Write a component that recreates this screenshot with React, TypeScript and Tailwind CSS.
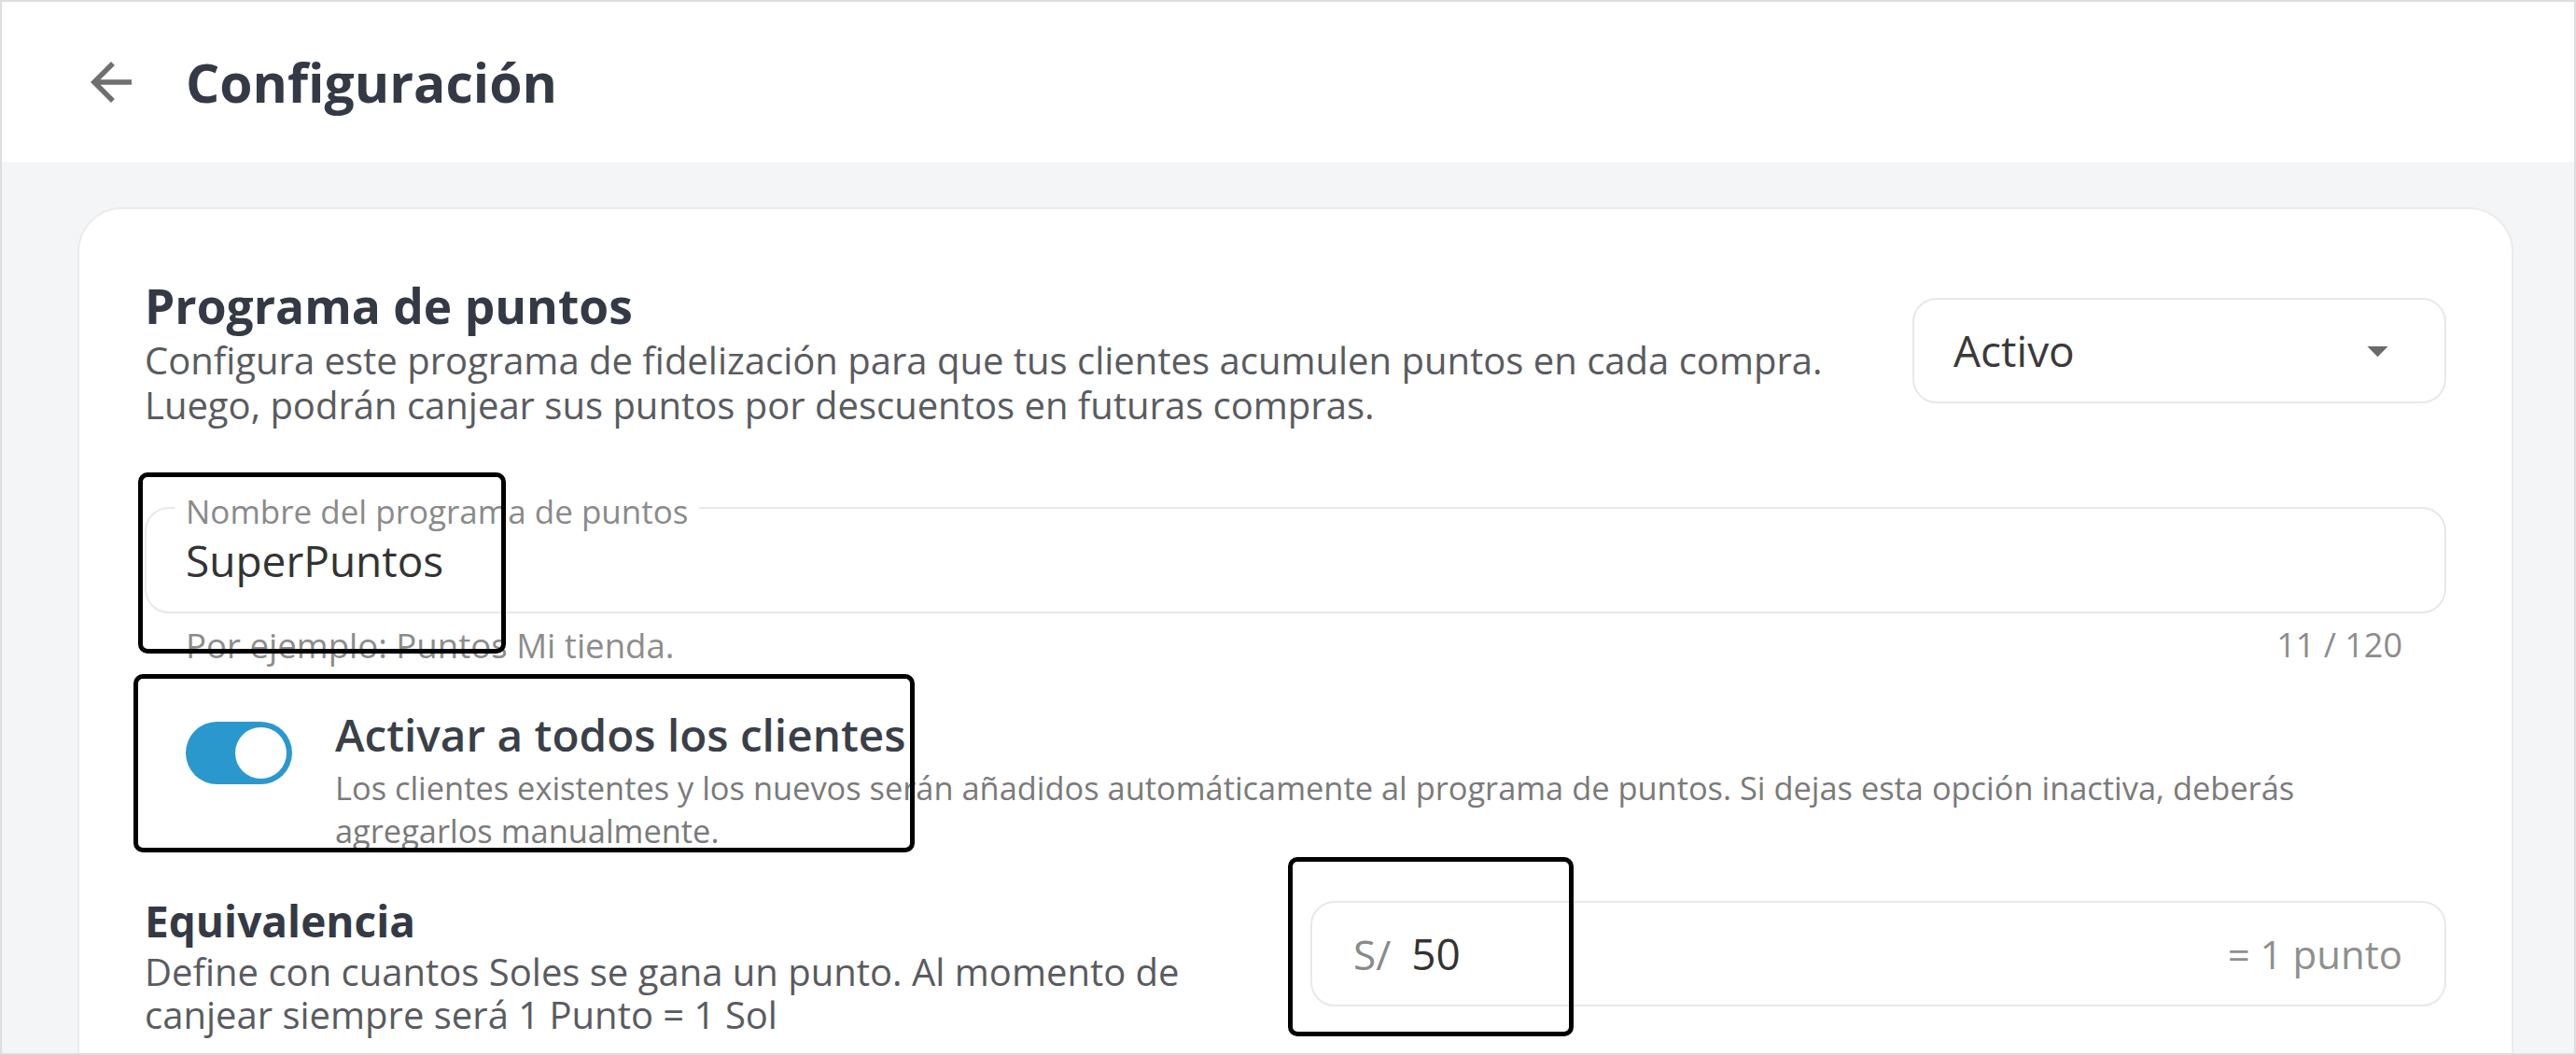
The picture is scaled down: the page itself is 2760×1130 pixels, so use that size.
import { ReactNode } from 'react';

// Configuración > Programa de puntos (settings screen, 2.875x scale)

function ArrowBack() {
  return (
    <svg viewBox="0 0 24 24" className="h-[66px] w-[66px] fill-[#6f6f6f]">
      <path d="M20 11H7.83l5.59-5.59L12 4l-8 8 8 8 1.41-1.41L7.83 13H20v-2z" />
    </svg>
  );
}

function ArrowDropDown() {
  return (
    <svg viewBox="0 0 24 24" className="h-[53px] w-[53px] fill-[#6a6a6a]">
      <path d="M7 10l5 5 5-5z" />
    </svg>
  );
}

function Toggle({ on }: { on: boolean }) {
  return (
    <div
      className={`flex h-[67px] w-[114px] shrink-0 items-center rounded-full p-[6px] ${
        on ? 'justify-end bg-[#2a98cd]' : 'justify-start bg-[#c4c4c4]'
      }`}
    >
      <div className="h-[55px] w-[55px] rounded-full bg-white" />
    </div>
  );
}

function SectionTitle({ children, size }: { children: ReactNode; size: string }) {
  return <h2 className={`font-bold text-[#343a45] ${size}`}>{children}</h2>;
}

function Annotation({ className }: { className: string }) {
  return (
    <div
      className={`pointer-events-none absolute rounded-[10px] border-[5px] border-black ${className}`}
    />
  );
}

export default function App() {
  return (
    <div className="relative h-[1130px] w-[2760px] overflow-hidden border-2 border-[#dedede] bg-[#f4f5f7] font-['Open_Sans',sans-serif]">
      <header className="flex h-[172px] items-center gap-[47px] bg-white pl-[84px]">
        <ArrowBack />
        <h1 className="text-[57px] font-bold leading-none text-[#343a45]">Configuración</h1>
      </header>

      <main className="pl-[81px] pr-[65px] pt-[48px]">
        <section className="rounded-[48px] border-2 border-[#ebebeb] bg-white px-[70px] pb-[80px] pt-[73px]">
          {/* Programa de puntos */}
          <div className="flex items-start justify-between gap-[80px]">
            <div>
              <SectionTitle size="text-[51.5px] leading-[60px]">Programa de puntos</SectionTitle>
              <p className="mt-[5px] text-[40px] leading-[48px] text-[#595b60]">
                Configura este programa de fidelización para que tus clientes acumulen puntos en cada compra.
                <br />
                Luego, podrán canjear sus puntos por descuentos en futuras compras.
              </p>
            </div>
            <div className="mt-[22px] flex h-[113px] w-[572px] shrink-0 items-center justify-between rounded-[26px] border-2 border-[#e8e8e8] pl-[42px] pr-[45px]">
              <span className="text-[46px] text-[#3a3a3a]">Activo</span>
              <ArrowDropDown />
            </div>
          </div>

          {/* Nombre del programa */}
          <div className="relative mt-[85px] flex h-[114px] items-center rounded-[26px] border-2 border-[#e8e8e8] px-[42px]">
            <span className="absolute left-[30px] top-[-16px] bg-white px-[12px] text-[35px] leading-[38px] text-[#8a8a8a]">
              Nombre del programa de puntos
            </span>
            <span className="text-[46px] text-[#333]">SuperPuntos</span>
          </div>
          <div className="mt-[12px] flex justify-between pl-[44px] pr-[47px] text-[36.6px] leading-[44px] text-[#8c8c8c]">
            <span>Por ejemplo: Puntos Mi tienda.</span>
            <span className="text-[36px]">11 / 120</span>
          </div>

          {/* Activar a todos los clientes */}
          <div className="mt-[46px] flex items-start gap-[46px] pl-[44px]">
            <div className="mt-[14px]">
              <Toggle on />
            </div>
            <div className="flex-1">
              <h3 className="text-[47.7px] font-semibold leading-[56px] text-[#3a3f48]">
                Activar a todos los clientes
              </h3>
              <p className="mt-[6px] text-[34.4px] leading-[46px] text-[#7a7a7a]">
                Los clientes existentes y los nuevos serán añadidos automáticamente al programa de puntos. Si dejas
                esta opción inactiva, deberás agregarlos manualmente.
              </p>
            </div>
          </div>

          {/* Equivalencia */}
          <div className="mt-[45px] grid grid-cols-2 items-start gap-[32px]">
            <div>
              <SectionTitle size="text-[46px] leading-[56px]">Equivalencia</SectionTitle>
              <p className="mt-[4px] text-[40px] leading-[46px] text-[#595b60]">
                Define con cuantos Soles se gana un punto. Al momento de canjear siempre será 1 Punto = 1 Sol
              </p>
            </div>
            <div className="mt-[7px] flex h-[113px] items-center rounded-[26px] border-2 border-[#e8e8e8] pl-[44px] pr-[45px]">
              <span className="text-[44px] text-[#8a8a8a]">S/</span>
              <span className="ml-[22px] text-[46px] text-[#333]">50</span>
              <span className="ml-auto text-[42px] text-[#8f8f8f]">= 1 punto</span>
            </div>
          </div>
        </section>
      </main>

      <Annotation className="left-[146px] top-[504px] h-[194px] w-[394px]" />
      <Annotation className="left-[141px] top-[720px] h-[191px] w-[837px]" />
      <Annotation className="left-[1378px] top-[916px] h-[192px] w-[306px]" />
    </div>
  );
}
